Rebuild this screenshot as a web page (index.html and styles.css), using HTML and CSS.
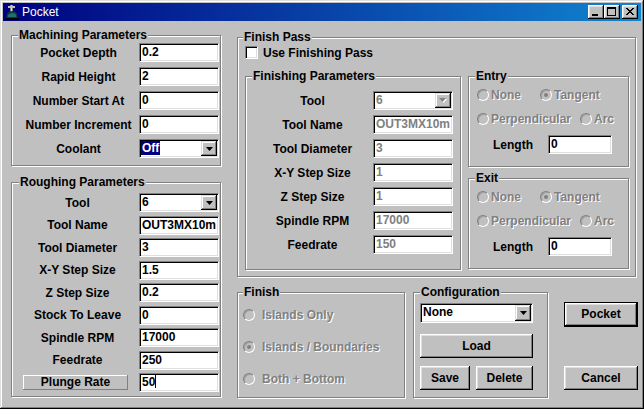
FILE: index.html
```html
<html>
<head>
  <title>Pocket</title>
  <link rel="stylesheet" href="styles.css">
</head>
<body>
<div class="window">
  <div class="titlebar">
    <svg class="appicon" width="16" height="16" viewBox="0 0 16 16">
      <rect x="6" y="1" width="3" height="7" fill="#808080"/>
      <rect x="7" y="1" width="1" height="7" fill="#dfdfdf"/>
      <rect x="4" y="2" width="7" height="2" fill="#c0c0c0"/>
      <path d="M2 15 L3 10 Q4 7 8 7 Q12 7 13 10 L14 15 Z" fill="#0c3c3c"/>
      <path d="M4 11 Q6 9 9 9 Q11 9 12 11 L12 13 L4 13 Z" fill="#1e7070"/>
      <rect x="1" y="14" width="14" height="2" fill="#000"/>
    </svg>
    <span class="title">Pocket</span>
    <div class="caption-btns">
      <span class="cbtn"><svg width="16" height="14"><rect x="4" y="9" width="6" height="2"/></svg></span>
      <span class="cbtn"><svg width="16" height="14"><rect x="3" y="2" width="9" height="2"/><rect x="3" y="2" width="1" height="9"/><rect x="11" y="2" width="1" height="9"/><rect x="3" y="10" width="9" height="1"/></svg></span>
      <span class="cbtn close"><svg width="16" height="14"><path d="M4 3h2v1H4z M10 3h2v1h-2z M5 4h2v1H5z M9 4h2v1H9z M6 5h4v1H6z M7 6h2v1H7z M6 7h4v1H6z M5 8h2v1H5z M9 8h2v1H9z M4 9h2v1H4z M10 9h2v1h-2z"/></svg></span>
    </div>
  </div>

  <div class="client">
    <div class="col-left">
      <fieldset class="group machining">
        <legend>Machining Parameters</legend>
        <div class="params">
          <label>Pocket Depth</label><div class="edit">0.2</div>
          <label>Rapid Height</label><div class="edit">2</div>
          <label>Number Start At</label><div class="edit">0</div>
          <label>Number Increment</label><div class="edit">0</div>
          <label>Coolant</label>
          <div class="combo"><span class="val sel-val"><span class="sel">Off</span></span><span class="drop"><svg width="7" height="4"><path d="M0 0h7L3.5 4z"/></svg></span></div>
        </div>
      </fieldset>

      <fieldset class="group roughing">
        <legend>Roughing Parameters</legend>
        <div class="params">
          <label>Tool</label>
          <div class="combo"><span class="val">6</span><span class="drop"><svg width="7" height="4"><path d="M0 0h7L3.5 4z"/></svg></span></div>
          <label>Tool Name</label><div class="edit">OUT3MX10m</div>
          <label>Tool Diameter</label><div class="edit">3</div>
          <label>X-Y Step Size</label><div class="edit">1.5</div>
          <label>Z Step Size</label><div class="edit">0.2</div>
          <label>Stock To Leave</label><div class="edit">0</div>
          <label>Spindle RPM</label><div class="edit">17000</div>
          <label>Feedrate</label><div class="edit">250</div>
          <div class="plunge">Plunge Rate</div><div class="edit">50<span class="caret"></span></div>
        </div>
      </fieldset>
    </div>

    <div class="col-right">
      <fieldset class="group finish-pass">
        <legend>Finish Pass</legend>
        <div class="check"><span class="checkbox"></span>Use Finishing Pass</div>
        <div class="pass-row">
          <fieldset class="group finishing">
            <legend>Finishing Parameters</legend>
            <div class="params">
              <label>Tool</label>
              <div class="combo off"><span class="val">6</span><span class="drop"><svg width="8" height="5"><path d="M1 1h7L4.5 5z" fill="#fff"/><path d="M0 0h7L3.5 4z" fill="#808080"/></svg></span></div>
              <label>Tool Name</label><div class="edit off">OUT3MX10m</div>
              <label>Tool Diameter</label><div class="edit off">3</div>
              <label>X-Y Step Size</label><div class="edit off">1</div>
              <label>Z Step Size</label><div class="edit off">1</div>
              <label>Spindle RPM</label><div class="edit off">17000</div>
              <label>Feedrate</label><div class="edit off">150</div>
            </div>
          </fieldset>

          <div class="lead-col">
            <fieldset class="group lead">
              <legend>Entry</legend>
              <div class="radio-row">
                <span class="opt w63"><span class="radio"></span>None</span>
                <span class="opt"><span class="radio on"></span>Tangent</span>
              </div>
              <div class="radio-row">
                <span class="opt w103"><span class="radio"></span>Perpendicular</span>
                <span class="opt"><span class="radio"></span>Arc</span>
              </div>
              <div class="len-row"><label>Length</label><div class="edit">0</div></div>
            </fieldset>

            <fieldset class="group lead exit">
              <legend>Exit</legend>
              <div class="radio-row">
                <span class="opt w63"><span class="radio"></span>None</span>
                <span class="opt"><span class="radio on"></span>Tangent</span>
              </div>
              <div class="radio-row">
                <span class="opt w103"><span class="radio"></span>Perpendicular</span>
                <span class="opt"><span class="radio"></span>Arc</span>
              </div>
              <div class="len-row"><label>Length</label><div class="edit">0</div></div>
            </fieldset>
          </div>
        </div>
      </fieldset>

      <div class="bottom-row">
        <fieldset class="group finish">
          <legend>Finish</legend>
          <div class="opt big"><span class="radio"></span>Islands Only</div>
          <div class="opt big"><span class="radio on"></span>Islands / Boundaries</div>
          <div class="opt big"><span class="radio"></span>Both + Bottom</div>
        </fieldset>

        <fieldset class="group config">
          <legend>Configuration</legend>
          <div class="combo cfg"><span class="val">None</span><span class="drop"><svg width="7" height="4"><path d="M0 0h7L3.5 4z"/></svg></span></div>
          <div class="btn load">Load</div>
          <div class="btn-pair">
            <div class="btn save">Save</div>
            <div class="btn del">Delete</div>
          </div>
        </fieldset>

        <div class="actions">
          <div class="btn default">Pocket</div>
          <div class="btn cancel">Cancel</div>
        </div>
      </div>
    </div>
  </div>
</div>
</body>
</html>
```

FILE: styles.css
```css
* {
  box-sizing: border-box;
}
body {
  margin: 0;
  background: #000;
  font-family: "Liberation Sans", Arial, sans-serif;
  font-size: 12px;
  font-weight: bold;
  color: #000;
}
.window {
  width: 644px;
  height: 409px;
  padding: 3px;
  background: #c0c0c0;
  box-shadow: inset -1px -1px #000, inset 1px 1px #dfdfdf, inset -2px -2px #808080, inset 2px 2px #fff;
  overflow: hidden;
}

/* title bar */
.titlebar {
  height: 18px;
  display: flex;
  align-items: center;
  padding: 0 3px 0 1px;
  background: linear-gradient(to right, #000080, #1084d0);
  color: #fff;
}
.appicon {
  display: block;
}
.title {
  font-weight: normal;
  margin-left: 2px;
}
.caption-btns {
  margin-left: auto;
  display: flex;
}
.cbtn {
  width: 16px;
  height: 14px;
  background: #c0c0c0;
  box-shadow: inset -1px -1px #000, inset 1px 1px #fff, inset -2px -2px #808080, inset 2px 2px #dfdfdf;
}
.cbtn svg {
  display: block;
}
.cbtn.close {
  margin-left: 2px;
}

/* layout */
.client {
  display: flex;
  padding-left: 8px;
}
.col-left {
  width: 211px;
  margin-top: 7px;
}
.col-right {
  margin-left: 15px;
  margin-top: 9px;
  width: 401px;
}

/* group boxes */
.group {
  margin: 0;
  padding: 0;
  min-width: 0;
  border: 1px solid #808080;
  box-shadow: 1px 1px #fff, inset 1px 1px #fff;
}
.group legend {
  padding: 0 1px;
  margin-left: -2px;
  height: 14px;
  line-height: 14px;
  background: #c0c0c0;
}
.machining {
  width: 210px;
  padding: 1px 1px 7px 8px;
}
.roughing {
  width: 210px;
  margin-top: 9px;
  padding: 4px 1px 4px 6px;
}
.roughing legend {
  margin-left: 1px;
}
.params {
  display: grid;
  grid-template-columns: 1fr 80px;
  column-gap: 2px;
  row-gap: 5px;
  align-items: center;
}
.roughing .params {
  row-gap: 3.5px;
}
.params label {
  text-align: center;
  white-space: nowrap;
}

/* controls */
.edit {
  height: 19px;
  padding: 0 2px;
  background: #fff;
  border: 1px solid;
  border-color: #808080 #fff #fff #808080;
  box-shadow: inset 1px 1px #000, inset -1px -1px #dfdfdf;
  line-height: 17px;
  white-space: nowrap;
  overflow: hidden;
}
.edit.off {
  color: #808080;
}
.caret {
  display: inline-block;
  width: 1px;
  height: 13px;
  background: #000;
  vertical-align: -2px;
}
.combo {
  height: 19px;
  display: flex;
  padding: 1px;
  background: #fff;
  border: 1px solid;
  border-color: #808080 #fff #fff #808080;
  box-shadow: inset 1px 1px #000, inset -1px -1px #dfdfdf;
}
.combo .val {
  flex: 1;
  padding-left: 1px;
  line-height: 15px;
}
.combo .sel-val {
  padding-left: 0;
}
.sel {
  padding: 0 1px;
  background: #000080;
  color: #fff;
}
.combo.off .val {
  color: #808080;
}
.drop {
  width: 16px;
  display: flex;
  align-items: center;
  justify-content: center;
  background: #c0c0c0;
  box-shadow: inset -1px -1px #000, inset 1px 1px #dfdfdf, inset -2px -2px #808080, inset 2px 2px #fff;
}
.drop svg {
  display: block;
}
.btn {
  height: 24px;
  line-height: 24px;
  text-align: center;
  background: #c0c0c0;
  box-shadow: inset -1px -1px #000, inset 1px 1px #fff, inset -2px -2px #808080, inset 2px 2px #dfdfdf;
}
.plunge {
  width: 105px;
  height: 15px;
  margin-left: 5px;
  line-height: 15px;
  text-align: center;
  box-shadow: inset -1px -1px #808080, inset 1px 1px #fff;
}

/* finish pass */
.finish-pass {
  width: 399px;
  padding: 2px 6px 6px 7px;
}
.check {
  display: flex;
  align-items: center;
  height: 13px;
}
.checkbox {
  width: 13px;
  height: 13px;
  margin-right: 5px;
  background: #fff;
  border: 1px solid;
  border-color: #808080 #fff #fff #808080;
  box-shadow: inset 1px 1px #000, inset -1px -1px #dfdfdf;
}
.pass-row {
  display: flex;
  align-items: flex-start;
  margin-top: 10px;
}
.finishing {
  width: 216px;
  padding: 8px 7px 15px 8px;
}
.lead-col {
  margin-left: 7px;
  width: 161px;
}
.lead {
  width: 161px;
  padding: 4px 6px 12px 8px;
}
.lead.exit {
  margin-top: 4px;
}
.radio-row {
  display: flex;
  height: 16px;
  margin-bottom: 8px;
}
.opt {
  display: flex;
  align-items: center;
  color: #808080;
  text-shadow: 1px 1px #fff;
  white-space: nowrap;
}
.opt .radio {
  margin-right: 2px;
}
.w63 {
  width: 63px;
}
.w103 {
  width: 103px;
}
.radio {
  position: relative;
  width: 12px;
  height: 12px;
  flex: none;
  border-radius: 50%;
  border: 1px solid;
  border-color: #808080 #fff #fff #808080;
  box-shadow: inset 1px 1px #a0a0a0;
}
.radio.on::after {
  content: "";
  position: absolute;
  left: 3px;
  top: 3px;
  width: 4px;
  height: 4px;
  border-radius: 50%;
  background: #808080;
}
.len-row {
  display: flex;
  align-items: center;
  padding-left: 16px;
}
.len-row label {
  width: 55px;
}
.len-row .edit {
  width: 64px;
}

/* bottom row */
.bottom-row {
  display: flex;
  align-items: flex-start;
  margin-top: 8px;
}
.finish {
  width: 168px;
  padding: 8px 0 10px 5px;
}
.finish legend {
  margin-left: 0;
}
.opt.big {
  height: 16px;
  margin-bottom: 16px;
}
.opt.big:last-child {
  margin-bottom: 0;
}
.opt.big .radio {
  margin-right: 7px;
}
.config {
  width: 135px;
  margin-left: 8px;
  padding: 4px 0 7px 6px;
}
.config legend {
  margin-left: 0;
}
.combo.cfg {
  width: 113px;
  height: 20px;
}
.load {
  width: 113px;
  margin-top: 11px;
}
.btn-pair {
  display: flex;
  margin-top: 8px;
}
.save {
  width: 50px;
}
.del {
  width: 57px;
  margin-left: 6px;
}
.actions {
  width: 74px;
  margin-left: 16px;
}
.btn.default {
  height: 25px;
  margin-top: 17px;
  line-height: 23px;
  border: 1px solid #000;
}
.btn.cancel {
  margin-top: 39px;
}
```
